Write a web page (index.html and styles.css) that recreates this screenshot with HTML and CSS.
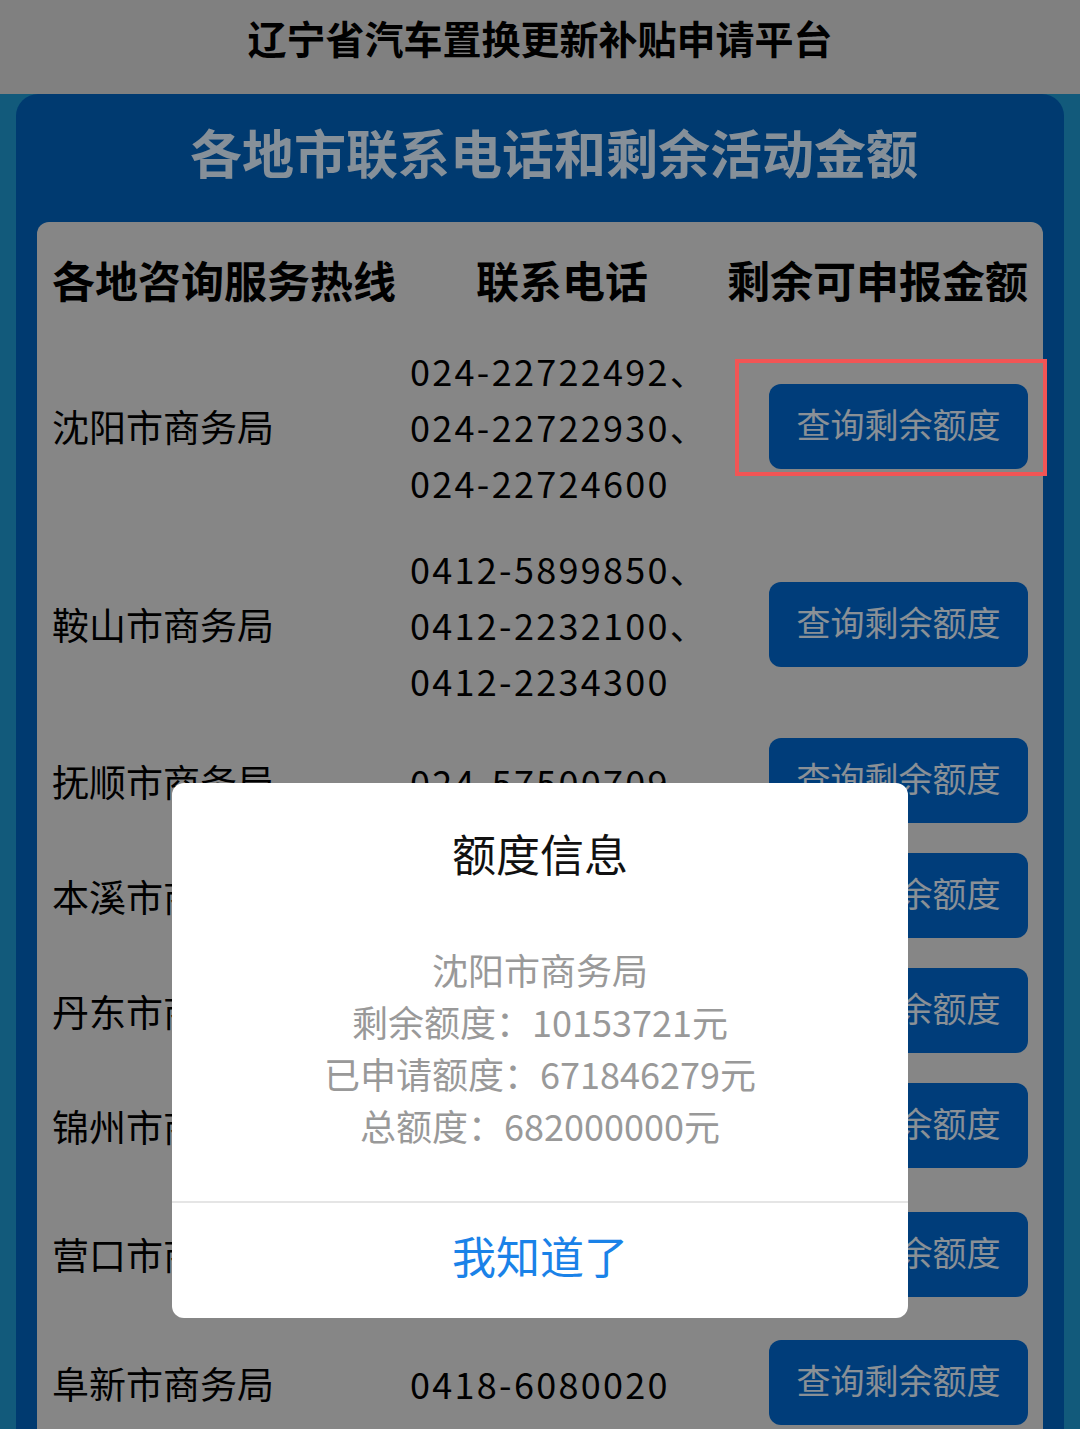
FILE: index.html
```html
<!DOCTYPE html>
<html lang="zh-CN">
<head>
  <meta charset="UTF-8">
  <title>辽宁省汽车置换更新补贴申请平台</title>
  <link rel="stylesheet" href="styles.css">
</head>
<body>

<div class="topbar">辽宁省汽车置换更新补贴申请平台</div>

<div class="page">
  <div class="card">
    <h2 class="card-title">各地市联系电话和剩余活动金额</h2>

    <div class="panel">
      <div class="row head">
        <div>各地咨询服务热线</div>
        <div class="head-phone">联系电话</div>
        <div class="head-amount">剩余可申报金额</div>
      </div>

      <div class="row">
        <div class="name">沈阳市商务局</div>
        <div class="phones">024-22722492、<br>024-22722930、<br>024-22724600</div>
        <button class="query">查询剩余额度</button>
      </div>
      <div class="row">
        <div class="name">鞍山市商务局</div>
        <div class="phones">0412-5899850、<br>0412-2232100、<br>0412-2234300</div>
        <button class="query">查询剩余额度</button>
      </div>
      <div class="row">
        <div class="name">抚顺市商务局</div>
        <div class="phones">024-57500709</div>
        <button class="query">查询剩余额度</button>
      </div>
      <div class="row">
        <div class="name">本溪市商务局</div>
        <div class="phones">024-42840316</div>
        <button class="query">查询剩余额度</button>
      </div>
      <div class="row">
        <div class="name">丹东市商务局</div>
        <div class="phones">0415-3127302</div>
        <button class="query">查询剩余额度</button>
      </div>
      <div class="row">
        <div class="name">锦州市商务局</div>
        <div class="phones">0416-3166012</div>
        <button class="query">查询剩余额度</button>
      </div>
      <div class="row">
        <div class="name">营口市商务局</div>
        <div class="phones">0417-2826339、<br>0417-2826079</div>
        <button class="query">查询剩余额度</button>
      </div>
      <div class="row">
        <div class="name">阜新市商务局</div>
        <div class="phones">0418-6080020</div>
        <button class="query">查询剩余额度</button>
      </div>
      <div class="row">
        <div class="name">辽阳市商务局</div>
        <div class="phones">0419-3123069</div>
        <button class="query">查询剩余额度</button>
      </div>
    </div>
  </div>
</div>

<div class="mask"></div>

<div class="dialog">
  <div class="dialog-title">额度信息</div>
  <div class="dialog-body">
    沈阳市商务局<br>
    剩余额度：10153721元<br>
    已申请额度：671846279元<br>
    总额度：682000000元
  </div>
  <div class="dialog-btn">我知道了</div>
</div>

<div class="mark"></div>

</body>
</html>
```

FILE: styles.css
```css
body {
  margin: 0;
  font-family: "Noto Sans CJK SC", "Noto Sans", sans-serif;
  background: #1e96cd;
  color: #000;
}

.topbar {
  height: 94px;
  line-height: 74px;
  background: #d6d6d6;
  text-align: center;
  font-size: 39px;
  font-weight: bold;
}

.page {
  padding: 0 16px;
}

.card {
  background: #0061bb;
  border-radius: 22px 22px 0 0;
  padding: 0 21px;
}

.card-title {
  margin: 0;
  padding: 22px 0 34px 28px;
  line-height: 72px;
  text-align: center;
  font-size: 52px;
  font-weight: bold;
  color: #e0f0ff;
}

.panel {
  background: #e0e0e0;
  border-radius: 12px 12px 0 0;
  padding: 15px;
}

.row {
  display: grid;
  grid-template-columns: 358px 318px 1fr;
  align-items: center;
  padding: 15px 0;
}

.row.head {
  grid-template-columns: 358px 310px 1fr;
  font-size: 43px;
  font-weight: bold;
  line-height: 60px;
  white-space: nowrap;
  padding: 12px 0 18px;
}

.head-phone {
  padding-left: 66px;
}

.head-amount {
  text-align: right;
}

.name {
  font-size: 37px;
}

.phones {
  font-size: 36px;
  line-height: 56px;
  letter-spacing: 2.3px;
  white-space: nowrap;
}

.query {
  justify-self: end;
  width: 259px;
  height: 85px;
  border: none;
  border-radius: 12px;
  background: #0066cc;
  color: #e6f0fa;
  font-family: inherit;
  font-size: 34px;
  line-height: 79px;
  padding: 0 0 6px;
}

.mask {
  position: fixed;
  inset: 0;
  background: rgba(0, 0, 0, 0.4);
}

.dialog {
  position: fixed;
  top: 783px;
  left: 172px;
  width: 736px;
  background: #fff;
  border-radius: 12px;
  text-align: center;
}

.dialog-title {
  padding-top: 40px;
  line-height: 60px;
  font-size: 44px;
  color: #111;
}

.dialog-body {
  padding: 60px 20px 50px;
  font-size: 36px;
  line-height: 52px;
  color: #999;
}

.dialog-btn {
  border-top: 2px solid #e5e5e5;
  height: 115px;
  line-height: 104px;
  font-size: 44px;
  color: #1a82e8;
}

.mark {
  position: absolute;
  top: 359px;
  left: 735px;
  width: 304px;
  height: 109px;
  border: 4px solid #f25555;
}
```
